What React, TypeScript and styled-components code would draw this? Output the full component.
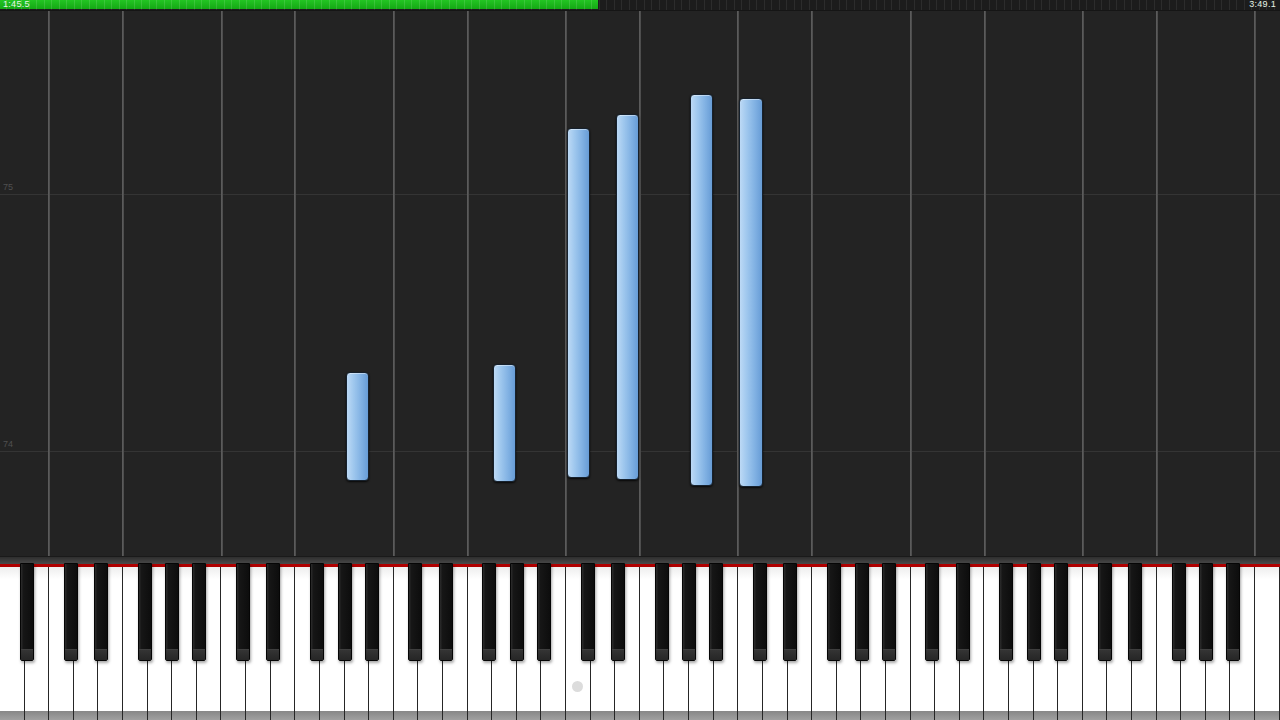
import { FC } from "react";
import styled, { createGlobalStyle } from "styled-components";

const WHITE_COUNT = 52;
const KEY_W = 1280 / WHITE_COUNT;
const NAMES = "ABCDEFG";
// shift of a black key from the boundary it sits on, by the white key to its left
const BLACK_SHIFT: Record<string, number> = { A: 2.5, C: -3, D: 2.5, F: -3, G: 0 };

const GRID_KEYS = [2, 5, 9, 12, 16, 19, 23, 26, 30, 33, 37, 40, 44, 47, 51];

// y of each measure line inside the roll
const MEASURES = [
  { label: "75", y: 183 },
  { label: "74", y: 440 },
];

const NOTES = [
  { key: 14, top: 361, bottom: 470 },
  { key: 20, top: 353, bottom: 471 },
  { key: 23, top: 117, bottom: 467 },
  { key: 25, top: 103, bottom: 469 },
  { key: 28, top: 83, bottom: 475 },
  { key: 30, top: 87, bottom: 476 },
];

const GlobalStyle = createGlobalStyle`
  html, body {
    margin: 0;
    padding: 0;
    background: #232323;
    overflow: hidden;
  }
  body {
    font-family: "Liberation Sans", Arial, sans-serif;
  }
`;

const Screen = styled.div`
  width: 1280px;
  height: 720px;
  display: flex;
  flex-direction: column;
  background: #232323;
`;

const Progress = styled.div`
  position: relative;
  height: 10px;
  flex: none;
  display: flex;
  align-items: stretch;
  background: repeating-linear-gradient(
      90deg,
      transparent 0,
      transparent 6.5px,
      rgba(255, 255, 255, 0.07) 6.5px,
      rgba(255, 255, 255, 0.07) 7.5px
    ),
    #1c1c1c;
  border-bottom: 1px solid #151515;
`;

const Played = styled.div`
  background: repeating-linear-gradient(
      90deg,
      transparent 0,
      transparent 6.5px,
      rgba(255, 255, 255, 0.12) 6.5px,
      rgba(255, 255, 255, 0.12) 7.5px
    ),
    linear-gradient(#23c523, #14a814);
  height: 9px;
`;

const Time = styled.span<{ $right?: boolean }>`
  position: absolute;
  top: 0;
  ${(p) => (p.$right ? "right: 4px;" : "left: 3px;")}
  font-size: 9px;
  line-height: 9px;
  color: #e6f4e6;
  letter-spacing: 0.3px;
`;

const Roll = styled.div`
  position: relative;
  flex: 1;
  overflow: hidden;
`;

const VLine = styled.div`
  position: absolute;
  top: 0;
  bottom: 0;
  width: 2px;
  background: linear-gradient(90deg, #616161, #474747);
`;

const HLine = styled.div`
  position: absolute;
  left: 0;
  right: 0;
  height: 1px;
  background: #343434;
`;

const Measure = styled.span`
  position: absolute;
  left: 3px;
  font-size: 9px;
  line-height: 9px;
  color: #505050;
`;

const Note = styled.div`
  position: absolute;
  box-sizing: border-box;
  border: 1px solid #16212d;
  border-radius: 4px;
  background: linear-gradient(90deg, #bcd9f5 0%, #a0c8ee 30%, #83b3e4 65%, #679cd6 100%);
  box-shadow: 0 1px 2px rgba(0, 0, 0, 0.8), inset 0 1px 0 rgba(255, 255, 255, 0.45);
`;

const Keyboard = styled.div`
  height: 164px;
  flex: none;
  display: flex;
  flex-direction: column;
`;

const TopBand = styled.div`
  height: 7px;
  background: linear-gradient(#2e2e2e, #4a4a4a);
  border-top: 1px solid #1a1a1a;
`;

const Keys = styled.div`
  position: relative;
  flex: 1;
  display: flex;
  border-top: 3px solid #b00000;
  box-shadow: inset 0 1px 0 #600000;
`;

const WhiteKey = styled.div`
  flex: 1;
  display: flex;
  flex-direction: column;
  justify-content: flex-end;
  align-items: center;
  background: linear-gradient(#eeeeee 0%, #ffffff 8%, #ffffff 100%);
  border-right: 1px solid #262626;
  &:last-child {
    border-right: none;
  }
`;

const KeyBase = styled.div`
  align-self: stretch;
  height: 9px;
  background: linear-gradient(#878787, #a0a0a0);
`;

const Marker = styled.div`
  width: 11px;
  height: 11px;
  border-radius: 50%;
  background: #dcdcdc;
  margin-bottom: 19px;
`;

const BlackKey = styled.div`
  position: absolute;
  top: -4px;
  width: 14px;
  height: 98px;
  box-sizing: border-box;
  display: flex;
  flex-direction: column;
  justify-content: flex-end;
  background: linear-gradient(90deg, #2c2c2c 0%, #161616 20%, #0d0d0d 100%);
  border: 1px solid #050505;
  border-radius: 0 0 2px 2px;
  box-shadow: 1px 2px 3px rgba(0, 0, 0, 0.35);
`;

const BlackTip = styled.div`
  height: 10px;
  background: linear-gradient(#343434, #262626);
  border-top: 1px solid #3e3e3e;
`;

const App: FC = () => {
  const blacks: number[] = [];
  for (let i = 0; i < WHITE_COUNT - 1; i++) {
    const name = NAMES[i % 7];
    if (name in BLACK_SHIFT) blacks.push(i);
  }

  return (
    <>
      <GlobalStyle />
      <Screen>
        <Progress>
          <Played style={{ width: 598 }} />
          <Time>1:45.5</Time>
          <Time $right>3:49.1</Time>
        </Progress>
        <Roll>
          {MEASURES.map((m) => (
            <HLine key={m.label} style={{ top: m.y }} />
          ))}
          {GRID_KEYS.map((k) => (
            <VLine key={k} style={{ left: Math.round(k * KEY_W) - 1 }} />
          ))}
          {MEASURES.map((m) => (
            <Measure key={m.label} style={{ top: m.y - 11 }}>
              {m.label}
            </Measure>
          ))}
          {NOTES.map((n) => (
            <Note
              key={n.key}
              style={{
                left: n.key * KEY_W + 1,
                width: KEY_W - 1.5,
                top: n.top,
                height: n.bottom - n.top,
              }}
            />
          ))}
        </Roll>
        <Keyboard>
          <TopBand />
          <Keys>
            {Array.from({ length: WHITE_COUNT }, (_, i) => (
              <WhiteKey key={i}>
                {i === 23 && <Marker />}
                <KeyBase />
              </WhiteKey>
            ))}
            {blacks.map((i) => (
              <BlackKey
                key={i}
                style={{ left: (i + 1) * KEY_W - 7 + BLACK_SHIFT[NAMES[i % 7]] }}>
                <BlackTip />
              </BlackKey>
            ))}
          </Keys>
        </Keyboard>
      </Screen>
    </>
  );
};

export default App;
